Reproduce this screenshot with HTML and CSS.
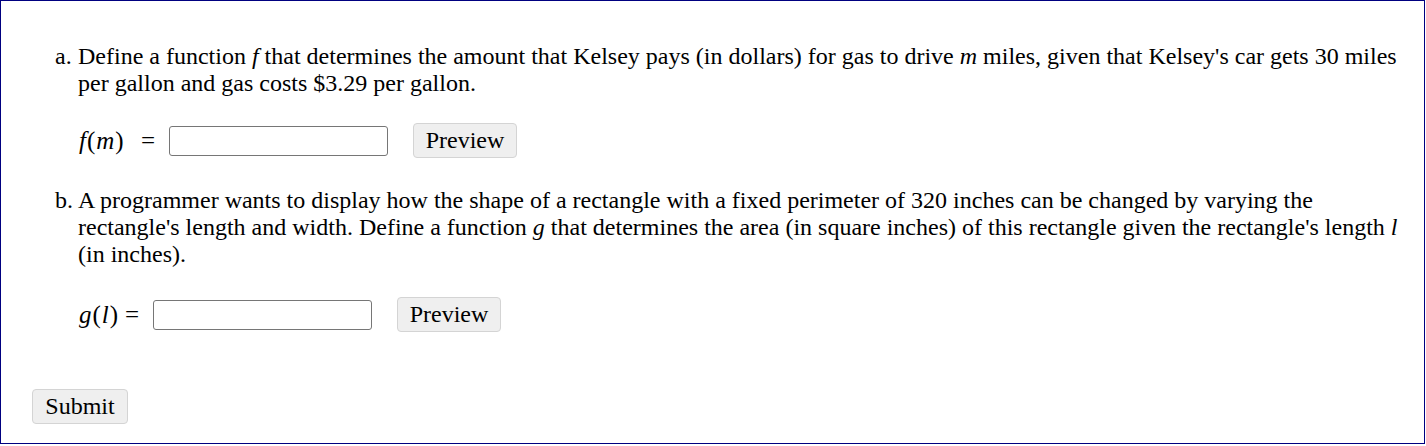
FILE: index.html
```html
<!DOCTYPE html>
<html lang="en">
  <head>
    <meta charset="UTF-8" />
    <meta name="viewport" content="width=device-width, initial-scale=1.0" />
    <title>Problem</title>
    <link rel="stylesheet" href="styles.css">
  </head>
  <body>
    <div class="problem">
      <div class="part">
        <div class="part-label">a.</div>
        <div class="part-body">
          <p class="part-text">
            Define a function <i class="mv">f</i> that determines the amount that Kelsey pays (in dollars) for gas to drive <i class="mv">m</i> miles, given that Kelsey's car gets 30 miles per gallon and gas costs $3.29 per gallon.
          </p>
          <div class="answer-row">
            <span class="math math-f"><span><i>f</i>(<i>m</i>)</span><span class="eq">=</span></span>
            <input class="answer" type="text" />
            <button class="btn btn-preview">Preview</button>
          </div>
        </div>
      </div>

      <div class="part part-b">
        <div class="part-label">b.</div>
        <div class="part-body">
          <p class="part-text">
            A programmer wants to display how the shape of a rectangle with a fixed perimeter of 320 inches can be changed by varying the rectangle's length and width. Define a function <i class="mv">g</i> that determines the area (in square inches) of this rectangle given the rectangle's length <i class="mv">l</i> (in inches).
          </p>
          <div class="answer-row answer-row-b">
            <span class="math math-g"><span><i>g</i>(<i>l</i>)</span><span class="eq">=</span></span>
            <input class="answer" type="text" />
            <button class="btn btn-preview">Preview</button>
          </div>
        </div>
      </div>

      <div class="actions">
        <button class="btn btn-submit">Submit</button>
      </div>
    </div>
  </body>
</html>
```

FILE: styles.css
```css
* {
  margin: 0;
  padding: 0;
  box-sizing: border-box;
}

body {
  font-family: 'Liberation Serif', 'Times New Roman', serif;
  font-size: 24px;
  color: #000;
  background: #fff;
}

.problem {
  width: 1425px;
  height: 444px;
  border: 1px solid #000080;
  padding: 42px 14px 0 31px;
}

.part {
  display: flex;
  padding-left: 23px;
}

.part-b {
  margin-top: 29px;
}

.part-label {
  width: 23px;
  flex-shrink: 0;
  line-height: 27px;
}

.part-body {
  flex: 1;
}

.part-text {
  line-height: 27px;
}

.mv {
  font-style: italic;
}

.answer-row {
  display: flex;
  align-items: center;
  height: 35px;
  margin-top: 26px;
}

.answer-row-b {
  margin-top: 29px;
}

/* math label: "f(m) =" laid out to the input's left edge */
.math {
  font-size: 25px;
  display: inline-flex;
  align-items: baseline;
  justify-content: space-between;
  padding-right: 14px;
}

.math i {
  padding: 0 1px;
}

.math-f {
  width: 91px;
}

.math-g {
  width: 75px;
}

.answer {
  width: 219px;
  height: 30px;
  border: 1px solid #767676;
  border-radius: 3px;
  background: #fff;
  margin-right: 25px;
}

.btn {
  font-family: 'Liberation Serif', 'Times New Roman', serif;
  font-size: 24px;
  height: 35px;
  padding: 0;
  background: #efefef;
  border: 1px solid #d4d4d4;
  border-radius: 4px;
  color: #000;
}

.btn-preview {
  width: 104px;
}

.actions {
  margin-top: 57px;
}

.btn-submit {
  width: 96px;
}
```
